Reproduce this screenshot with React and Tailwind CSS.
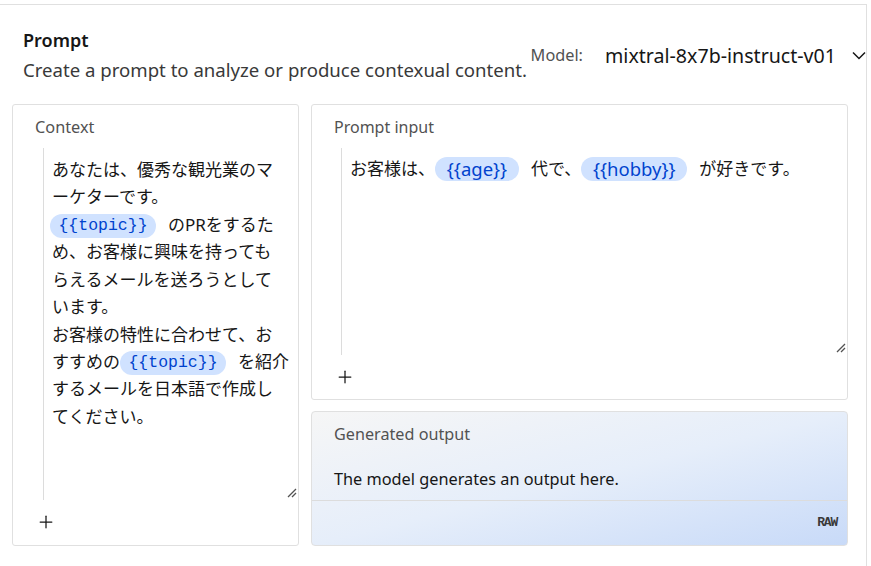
import { Plus } from 'lucide-react';

const Chip = ({ children, mono, w }) => (
  <span
    className={`inline-flex items-center justify-center h-6 rounded-full bg-[#d0e2ff] text-[#0043ce] ${w} ${
      mono ? "font-['Liberation_Mono',monospace] text-[16.5px]" : 'text-[18.5px]'
    }`}
  >
    {children}
  </span>
);

const Grip = () => (
  <svg width="10" height="10" viewBox="0 0 10 10" className="absolute bottom-[2px] right-[1px]">
    <path d="M1 9 L9 1 M5 9 L9 5" stroke="#525252" strokeWidth="1.3" fill="none" />
  </svg>
);

const Line = ({ children }) => (
  <div className="flex items-center h-[27.45px] whitespace-nowrap">{children}</div>
);

export default function App() {
  return (
    <div className="w-[871px] h-[566px] bg-white pt-1 overflow-hidden font-['Noto_Sans','Noto_Sans_CJK_JP',sans-serif] text-[#161616]">
      <div className="w-[867px] h-[562px] border-t border-r border-[#e0e0e0] flex flex-col">
        {/* Header */}
        <div className="flex items-center justify-between pl-[23px] pt-[24px]">
          <div className="flex-1 min-w-0 whitespace-nowrap">
            <h1 className="text-[18px] leading-[22px] font-semibold">Prompt</h1>
            <p className="mt-[7px] text-[18.6px] leading-[24px] text-[#393939]">
              Create a prompt to analyze or produce contexual content.
            </p>
          </div>
          <div className="flex items-center shrink-0 whitespace-nowrap">
            <span className="text-[16.3px] text-[#525252]">Model:</span>
            <span className="ml-[22px] text-[19.6px]">mixtral-8x7b-instruct-v01</span>
            <svg width="14" height="9" viewBox="0 0 14 9" className="ml-[16px]">
              <path d="M1 1.5 L7 7.5 L13 1.5" stroke="#161616" strokeWidth="1.5" fill="none" />
            </svg>
          </div>
        </div>

        {/* Cards */}
        <div className="flex gap-3 px-3 mt-[22px]">
          {/* Context */}
          <div className="w-[287px] h-[442px] border border-[#e0e0e0] rounded-[3px] flex flex-col">
            <div className="pl-[22px] pt-[12px] text-[16.3px] leading-[20px] text-[#525252]">Context</div>
            <div className="relative ml-[30px] mt-[11px] h-[352px] border-l border-[#dcdcdc] pl-[8px] pt-[8px] text-[17px]">
              <Line>あなたは、優秀な観光業のマ</Line>
              <Line>ーケターです。</Line>
              <Line>
                <span className="-ml-[2px] mr-[12px]"><Chip mono w="w-[106px]">{'{{topic}}'}</Chip></span>
                のPRをするた
              </Line>
              <Line>め、お客様に興味を持っても</Line>
              <Line>らえるメールを送ろうとして</Line>
              <Line>います。</Line>
              <Line>お客様の特性に合わせて、お</Line>
              <Line>
                すすめの<span className="mr-[12px]"><Chip mono w="w-[106px]">{'{{topic}}'}</Chip></span>を紹介
              </Line>
              <Line>するメールを日本語で作成し</Line>
              <Line>てください。</Line>
              <Grip />
            </div>
            <div className="pl-[23px] mt-[12px]">
              <Plus size={20} strokeWidth={1.5} />
            </div>
          </div>

          {/* Right column */}
          <div className="w-[537px] flex flex-col gap-[11px]">
            <div className="h-[296px] border border-[#e0e0e0] rounded-[3px] flex flex-col">
              <div className="pl-[22px] pt-[12px] text-[16px] leading-[20px] text-[#525252]">Prompt input</div>
              <div className="relative ml-[29px] mt-[11px] h-[207px] border-l border-[#dcdcdc] pl-[8px] pt-[7px] text-[17px]">
                <Line>
                  お客様は、<Chip w="w-[84px]">{'{{age}}'}</Chip>
                  <span className="ml-[12px]">代で、</span>
                  <Chip w="w-[106px]">{'{{hobby}}'}</Chip>
                  <span className="ml-[12px]">が好きです。</span>
                </Line>
                <Grip />
              </div>
              <div className="pl-[23px] mt-[12px]">
                <Plus size={20} strokeWidth={1.5} />
              </div>
            </div>

            <div className="h-[135px] border border-[#e0e0e0] rounded-[4px] flex flex-col bg-gradient-to-br from-[#f6f6f6] via-[#e6eefa] to-[#c8daf8]">
              <div className="pl-[22px] pt-[12px] text-[16.2px] leading-[20px] text-[#525252]">Generated output</div>
              <div className="pl-[22px] mt-[24px] text-[16.3px] leading-[22px]">The model generates an output here.</div>
              <div className="mt-[10px] border-t border-[#dcdcdc] flex-1 flex items-center justify-end pr-[10px]">
                <span className="font-['Liberation_Mono',monospace] text-[13px] font-bold tracking-[-1.2px] text-[#393939]">RAW</span>
              </div>
            </div>
          </div>
        </div>
      </div>
    </div>
  );
}
